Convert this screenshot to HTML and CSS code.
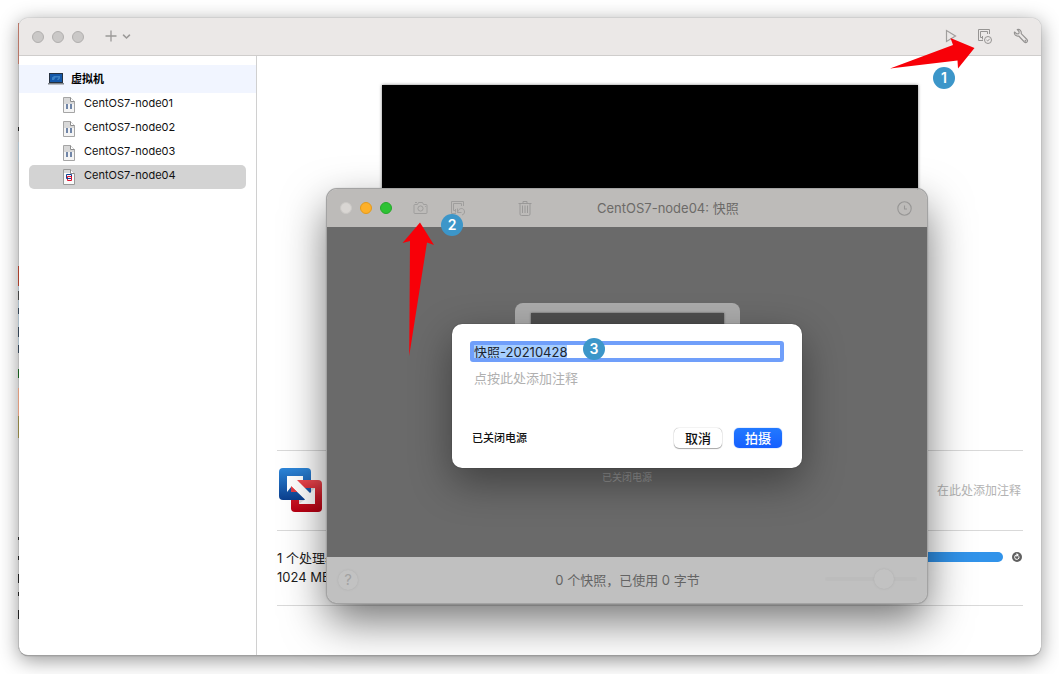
FILE: index.html
```html
<!DOCTYPE html>
<html lang="zh-CN">
<head>
<meta charset="utf-8">
<title>虚拟机资源库</title>
<link rel="stylesheet" href="styles.css">
</head>
<body>
<main class="window">
  <header class="toolbar">
    <div class="lights"><span class="light"></span><span class="light"></span><span class="light"></span></div>
    <button class="icon-btn add" aria-label="添加">
      <svg width="26" height="12" viewBox="0 0 26 12" fill="none" stroke="#9b9998"><path d="M6 .5v11M.5 6h11" stroke-width="1.3"/><path d="M18.500 5.200l3 2.800 3-2.800" stroke-width="1.600" stroke-linecap="round"/></svg>
    </button>
    <div class="tools">
      <button class="icon-btn" aria-label="启动"><svg width="12" height="14" viewBox="0 0 12 14" fill="none" stroke="#a09e9d" stroke-width="1.200"><path d="M1.500 1.500v11l9-5.500z"/></svg></button>
      <button class="icon-btn" aria-label="快照"><svg width="16" height="16" viewBox="0 0 16 16" fill="none" stroke="#969493"><path d="M6 12.500H1.500v-11h11V6"/><path d="M5.500 9.500H3.500v-6h7V6"/><path d="M5.500 8v3.500"/><circle cx="11" cy="12" r="3.500"/><path d="M9.500 12l1.200 1 2-2.200"/></svg></button>
      <button class="icon-btn" aria-label="设置"><svg width="16" height="16" viewBox="0 0 16 16" fill="none" stroke="#949291" stroke-width="1.100" stroke-linejoin="round"><path d="M4.200 1.500l2 2.300-.4 1.800-1.900.4L1.500 4C.8 6.500 3 8.600 5.700 8l5.700 6c1.700 1.600 4.100-.7 2.600-2.500L8.200 5.700C8.800 3 6.800.8 4.200 1.500z"/><circle cx="12.500" cy="12.800" r=".4"/></svg></button>
    </div>
    <svg class="arrow arrow-right" width="86" height="34" viewBox="0 0 86 34"><path fill="#f80008" d="M0 31.500L63 8 60.500 1 84.500 11 68 31.500 67.500 23.500z"/></svg>
    <span class="badge badge-1">1</span>
  </header>
  <div class="columns">
    <nav class="sidebar">
      <h2 class="group">
        <svg width="16" height="12" viewBox="0 0 16 12"><path fill="#26313f" d="M1 0h14v10H1z"/><path fill="#1457a8" d="M2 1h12v8H2z"/><path fill="#3a80c4" d="M4 7V4.500L6 3h6v2.500L10.500 7H9l1.500-2.500h-3L6 7z"/><path fill="#82868b" d="M0 10h16v1.500H0z"/></svg>
        虚拟机
      </h2>
      <ul class="vms">
        <li class="vm"><svg class="doc" width="12" height="16" viewBox="0 0 12 16"><path d="M.5.500h7l4 4v11H.500z" fill="#f4f4f4" stroke="#a5a5a5"/><path d="M1 1h6v4h4v2H1z" fill="#d8d8d8"/><path d="M7.500.500v4h4" fill="#fff" stroke="#8c8c8c"/><path d="M3 7h2v5H3zM7 7h2v5H7z" fill="#7186a8"/></svg>CentOS7-node01</li>
        <li class="vm"><svg class="doc" width="12" height="16" viewBox="0 0 12 16"><path d="M.5.500h7l4 4v11H.500z" fill="#f4f4f4" stroke="#a5a5a5"/><path d="M1 1h6v4h4v2H1z" fill="#d8d8d8"/><path d="M7.500.500v4h4" fill="#fff" stroke="#8c8c8c"/><path d="M3 7h2v5H3zM7 7h2v5H7z" fill="#7186a8"/></svg>CentOS7-node02</li>
        <li class="vm"><svg class="doc" width="12" height="16" viewBox="0 0 12 16"><path d="M.5.500h7l4 4v11H.500z" fill="#f4f4f4" stroke="#a5a5a5"/><path d="M1 1h6v4h4v2H1z" fill="#d8d8d8"/><path d="M7.500.500v4h4" fill="#fff" stroke="#8c8c8c"/><path d="M3 7h2v5H3zM7 7h2v5H7z" fill="#7186a8"/></svg>CentOS7-node03</li>
        <li class="vm selected"><svg class="doc" width="12" height="16" viewBox="0 0 12 16"><path d="M.5.500h7l4 4v11H.500z" fill="#fafafa" stroke="#999"/><path d="M1 1h6v3H1z" fill="#d8d8d8"/><path d="M7.500.500v4h4" fill="#fff" stroke="#8c8c8c"/><path d="M3.500 5.500h5v4h-5z" fill="none" stroke="#123f92"/><path d="M4.500 7.500h4v4h-4z" fill="none" stroke="#e0102c"/><path d="M4 9h2v1H4z" fill="#123f92"/></svg>CentOS7-node04</li>
      </ul>
    </nav>
    <section class="content">
      <div class="preview"></div>
      <div class="details">
        <div class="row row-notes">
          <svg width="44" height="45" viewBox="0 0 44 45">
            <defs><linearGradient id="b" gradientUnits="userSpaceOnUse" x1="0" y1="0" x2="0" y2="32"><stop stop-color="#2d86d9"/><stop offset="1" stop-color="#0b3f8e"/></linearGradient><linearGradient id="r" x2="0" y2="1"><stop stop-color="#ee4a51"/><stop offset=".5" stop-color="#cf1c29"/><stop offset="1" stop-color="#b90012"/></linearGradient></defs>
            <rect width="32" height="32" rx="4" fill="url(#b)"/>
            <rect x="12" y="12" width="31" height="32" rx="4" fill="url(#r)"/>
            <path fill="#dedede" d="M20 20h16v16H20z"/>
            <path fill="url(#b)" d="M12 24h12v-4h8v12H12z"/>
            <path fill="#fff" d="M8 8h16v4h-6L31 25l5-5v16H20l6-4.500L12.500 18.500 8 24z"/>
            <path fill="#e23a43" d="M12 18v6h6z"/>
          </svg>
          <span class="note">在此处添加注释</span>
        </div>
        <div class="row row-specs">
          <div class="specs">1 个处理器<br>1024 MB</div>
          <div class="disk"><div class="disk-bar"></div>
            <button class="icon-btn" aria-label="刷新"><svg width="10" height="10" viewBox="0 0 10 10"><circle cx="5" cy="5" r="5" fill="#606060"/><path d="M6.800 4.200A2.200 2.200 0 1 1 5 3" fill="none" stroke="#fff"/><path fill="#fff" d="M4.500 1l2.500 2-2.500 2z"/></svg></button></div>
        </div>
      </div>
    </section>
  </div>

  <section class="snapshots" aria-label="快照">
    <header class="snap-bar">
      <div class="lights"><span class="light pale"></span><span class="light amber"></span><span class="light green"></span></div>
      <button class="icon-btn" aria-label="拍摄快照"><svg width="15" height="14" viewBox="0 0 15 14" fill="none" stroke="#9f9e9d"><path d="M2 3.500h2.500L5.500 1.500h4l1 2H13a1 1 0 0 1 1 1v7a1 1 0 0 1-1 1H2a1 1 0 0 1-1-1v-7a1 1 0 0 1 1-1zM2 1.500h2"/><circle cx="7.500" cy="7.500" r="2.600"/><path d="M12 5.500h.8"/></svg></button>
      <button class="icon-btn restore" aria-label="恢复快照"><svg width="16" height="16" viewBox="0 0 16 16" fill="none" stroke="#9f9e9d"><path d="M6 13.500H1.500v-12h12V6"/><path d="M5.500 10.500H3.500v-7h8V6M5.500 9v3.500"/><path d="M7.500 8.500v4h4M7.500 12.500c1.500-5.500 7-5 7-.5 0 1.500-1 2.500-2.500 3"/></svg></button>
      <button class="icon-btn delete" aria-label="删除"><svg width="14" height="15" viewBox="0 0 14 15" fill="none" stroke="#9a9998"><path d="M.5 2.500h13M5 2.500v-2h4v2M2 2.500v10.500q0 1.500 1.500 1.500h7q1.500 0 1.500-1.500V2.500M4.500 4.500V12M7 4.500V12M9.500 4.500V12"/></svg></button>
      <h1 class="snap-title">CentOS7-node04: 快照</h1>
      <button class="icon-btn clock" aria-label="自动快照"><svg width="15" height="15" viewBox="0 0 15 15" fill="none" stroke="#979695" stroke-width="1.100"><circle cx="7.500" cy="7.500" r="6.700"/><path d="M7.500 4.500v3.500H10"/></svg></button>
      <span class="badge badge-2">2</span>
      <svg class="arrow arrow-up" width="33" height="134" viewBox="0 0 33 134"><path fill="#f80008" d="M18 .5L32 23l-7-2.500L7.200 134 8 19 .5 21z"/></svg>
    </header>
    <div class="snap-body">
      <div class="machine"><div class="screen"></div></div>
      <span class="state">已关闭电源</span>
      <form class="sheet" onsubmit="return false">
        <input class="name" id="name" type="text" value="快照-20210428" aria-label="快照名称" spellcheck="false" autocomplete="off">
        <textarea class="memo" placeholder="点按此处添加注释" aria-label="注释"></textarea>
        <div class="actions">
          <span class="power">已关闭电源</span>
          <button class="btn" type="button">取消</button>
          <button class="btn primary" type="submit">拍摄</button>
        </div>
        <span class="badge badge-3">3</span>
      </form>
    </div>
    <footer class="snap-foot">
      <button class="help" aria-label="帮助">?</button>
      <span class="summary">0 个快照，已使用 0 字节</span>
      <input class="zoom" type="range" min="0" max="100" value="68" aria-label="缩放">
    </footer>
  </section>
</main>
<script src="script.js"></script>
</body>
</html>
```
FILE: styles.css
```css
* { box-sizing: border-box; }
body {
  margin: 0;
  padding: 18px 18px 18px 19px;
  min-height: 100vh;
  display: flex;
  background: #fff;
  color: #1c1c1c;
  font: 12px/16px Inter, "Noto Sans CJK SC", sans-serif;
}
button, input, textarea { font: inherit; margin: 0; padding: 0; border: 0; }
svg { display: block; flex: none; }
h1, h2, ul { margin: 0; padding: 0; }

.window {
  position: relative;
  flex: 1;
  display: flex;
  flex-direction: column;
  border-radius: 9px;
  background: #fff;
  border-bottom: 1px solid #a0a0a0;
  box-shadow: 0 0 1px rgba(0,0,0,.5), 0 4px 20px rgba(0,0,0,.42);
}
.window::before {
  content: "";
  position: absolute;
  left: -1px;
  top: 5px;
  bottom: 6px;
  width: 1px;
  background: linear-gradient(#b97768 0 41px, #b8b8b8 41px 104px, #222 104px 108px, #b8b8b8 108px 119px, #aebfca 119px 139px, #b8b8b8 139px 243px, #a8402c 243px 263px, #a8bac6 263px 268px, #444 268px 277px, #a8bac6 277px 285px, #345 285px 291px, #a8bac6 291px 304px, #345 304px 314px, #a8bac6 314px 322px, #345 322px 330px, #b8b8b8 330px 346px, #175c1d 346px 355px, #b8b8b8 355px 365px, #dd9a7c 365px 393px, #8f8243 393px 415px, #b8b8b8 415px 514px, #222 514px 517px, #b8b8b8 517px 533px, #222 533px 537px, #b8b8b8 537px 551px, #222 551px 560px, #b8b8b8 560px 569px, #222 569px 573px, #b8b8b8 573px 587px, #222 587px 596px, #b8b8b8 596px);
}
.toolbar {
  position: relative;
  display: flex;
  align-items: center;
  height: 38px;
  padding: 0 12px 0 13px;
  background: #ebe8e7;
  border-bottom: 1px solid #cfcdcc;
  border-radius: 9px 9px 0 0;
}
.lights { display: flex; gap: 8px; }
.light { width: 12px; height: 12px; border-radius: 50%; background: #cac8c7; border: 1px solid #b1afae; }
.pale { background: #d9d6d3; border-color: #cbc9c6; }
.amber { background: #fdb02a; border-color: #e39a1c; }
.green { background: #2dc234; border-color: #24a82a; }
.icon-btn { display: flex; background: none; }
.add { margin-left: 21px; padding-bottom: 1px; }
.tools { display: flex; align-items: center; gap: 20px; margin-left: auto; padding-bottom: 2px; }

.columns { flex: 1; display: flex; }
.sidebar { width: 238px; padding-top: 9px; border-right: 1px solid #d0d0d0; }
.group {
  display: flex;
  align-items: center;
  gap: 7px;
  height: 28px;
  padding-left: 29px;
  background: #f1f5ff;
  font-size: 11px;
  font-weight: 700;
  color: #000;
}
.vms { list-style: none; padding: 0 10px; }
.vm { display: flex; align-items: center; gap: 9px; height: 24px; padding: 0 0 4px 34px; font-size: 11px; line-height: 20px; color: #111; }
.doc { margin-top: 4px; }
.selected { background: #d3d3d3; border-radius: 5px; }

.content { flex: 1; display: flex; flex-direction: column; padding: 29px 18px 49px 20px; }
.preview { width: 72%; max-width: 536px; aspect-ratio: 8 / 5; margin: 0 auto; background: #000; box-shadow: 0 0 3px rgba(0,0,0,.5); }
.details { margin-top: auto; border-bottom: 1px solid #d9d9d9; }
.row { display: flex; justify-content: space-between; border-top: 1px solid #d9d9d9; }
.row-notes { align-items: center; height: 80px; padding: 0 2px; }
.note { color: #b3b3b3; }
.row-specs { height: 75px; padding-top: 18px; font-size: 13px; line-height: 19px; }
.disk { display: flex; align-items: center; gap: 9px; width: 320px; height: 16px; padding-right: 1px; }
.disk-bar { flex: 1; height: 10px; border-radius: 5px; background: #3193ea; }

.snapshots {
  position: absolute;
  left: 308px;
  top: 171px;
  width: 600px;
  border-radius: 10px;
  box-shadow: 0 0 0 1px #a3a3a3, 0 0 2px rgba(0,0,0,.6), 0 18px 44px rgba(0,0,0,.55);
}
.snap-bar {
  position: relative;
  display: flex;
  align-items: center;
  height: 38px;
  padding: 0 15px 0 13px;
  background: #bdbbb9;
  border-radius: 10px 10px 0 0;
}
.snap-bar .lights { margin-right: 21px; }
.restore { margin-left: 22px; }
.delete { margin-left: 52px; }
.snap-title { margin-left: 65px; font-size: 13px; font-weight: 400; color: #6c6a68; }
.clock { margin-left: auto; }
.snap-body {
  position: relative;
  display: flex;
  flex-direction: column;
  align-items: center;
  height: 330px;
  padding-top: 76px;
  background: #6a6a6a;
}
.machine { width: 225px; height: 148px; padding: 10px 16px; border-radius: 8px; background: #acacac; }
.screen { height: 120px; background: #4e4e4e; box-shadow: 0 0 2px #555; }
.state { margin-top: 18px; font-size: 10px; color: #989898; }
.sheet {
  position: absolute;
  left: 125px;
  top: 97px;
  width: 350px;
  padding: 17px 18px 20px;
  display: flex;
  flex-direction: column;
  border-radius: 10px;
  background: #fff;
  box-shadow: 0 0 1px #222, 0 14px 40px rgba(0,0,0,.4);
}
.name {
  height: 21px;
  width: 314px;
  border: 4px solid #709ffa;
  border-radius: 3px;
  background: #fff;
  font-size: 13px;
  line-height: 13px;
  color: #1c2530;
  outline: none;
}
.name::selection { background: #a6ceff; color: #1c2530; }
.memo { height: 61px; padding: 7px 4px; border: 0; outline: 0; resize: none; font-size: 13px; line-height: 18px; background: none; }
.memo::placeholder { color: #b0b0b0; opacity: 1; }
.actions { display: flex; align-items: center; gap: 12px; padding: 5px 2px 0; }
.power { margin-right: auto; font-size: 11px; font-weight: 500; color: #111; }
.btn {
  width: 48px;
  height: 20px;
  border-radius: 5px;
  background: #fff;
  color: #111;
  font-size: 13px;
  font-weight: 500;
  line-height: 20px;
  box-shadow: 0 0 1px #888, 0 1px 1px #aaa;
}
.primary { background: linear-gradient(#2279ff, #155fff); color: #fff; box-shadow: 0 0 1px #155fff; }
.snap-foot {
  display: grid;
  grid-template-columns: 1fr auto 1fr;
  align-items: center;
  height: 46px;
  padding: 0 10px 0 11px;
  background: #c0c0c0;
  border-radius: 0 0 10px 10px;
}
.help { width: 20px; height: 20px; border-radius: 50%; background: #c2c2c2; color: #a2a2a2; font-size: 15px; line-height: 20px; box-shadow: 0 0 2px #aaa; }
.summary { font-size: 13px; color: #646464; }
.zoom { appearance: none; justify-self: end; width: 92px; height: 20px; margin-bottom: 3px; background: none; }
.zoom::-webkit-slider-runnable-track { height: 4px; border-radius: 2px; background: #bcbcbc; }
.zoom::-webkit-slider-thumb { appearance: none; width: 20px; height: 20px; margin-top: -8px; border-radius: 50%; background: #c2c2c2; box-shadow: 0 0 2px #aaa; }

.badge {
  position: absolute;
  width: 22px;
  height: 22px;
  border-radius: 50%;
  background: #3c96c9;
  color: #fff;
  font-size: 14px;
  font-weight: 600;
  line-height: 22px;
  text-align: center;
}
.badge-1 { right: 86px; top: 49px; }
.badge-2 { left: 114px; top: 25px; z-index: 1; }
.badge-3 { left: 131px; top: 14px; }
.arrow { position: absolute; }
.arrow-right { right: 65px; top: 19px; }
.arrow-up { left: 75px; top: 33px; z-index: 1; }
```
FILE: script.js
```js
const nameField = document.getElementById("name");
nameField.focus();
nameField.select();
```
